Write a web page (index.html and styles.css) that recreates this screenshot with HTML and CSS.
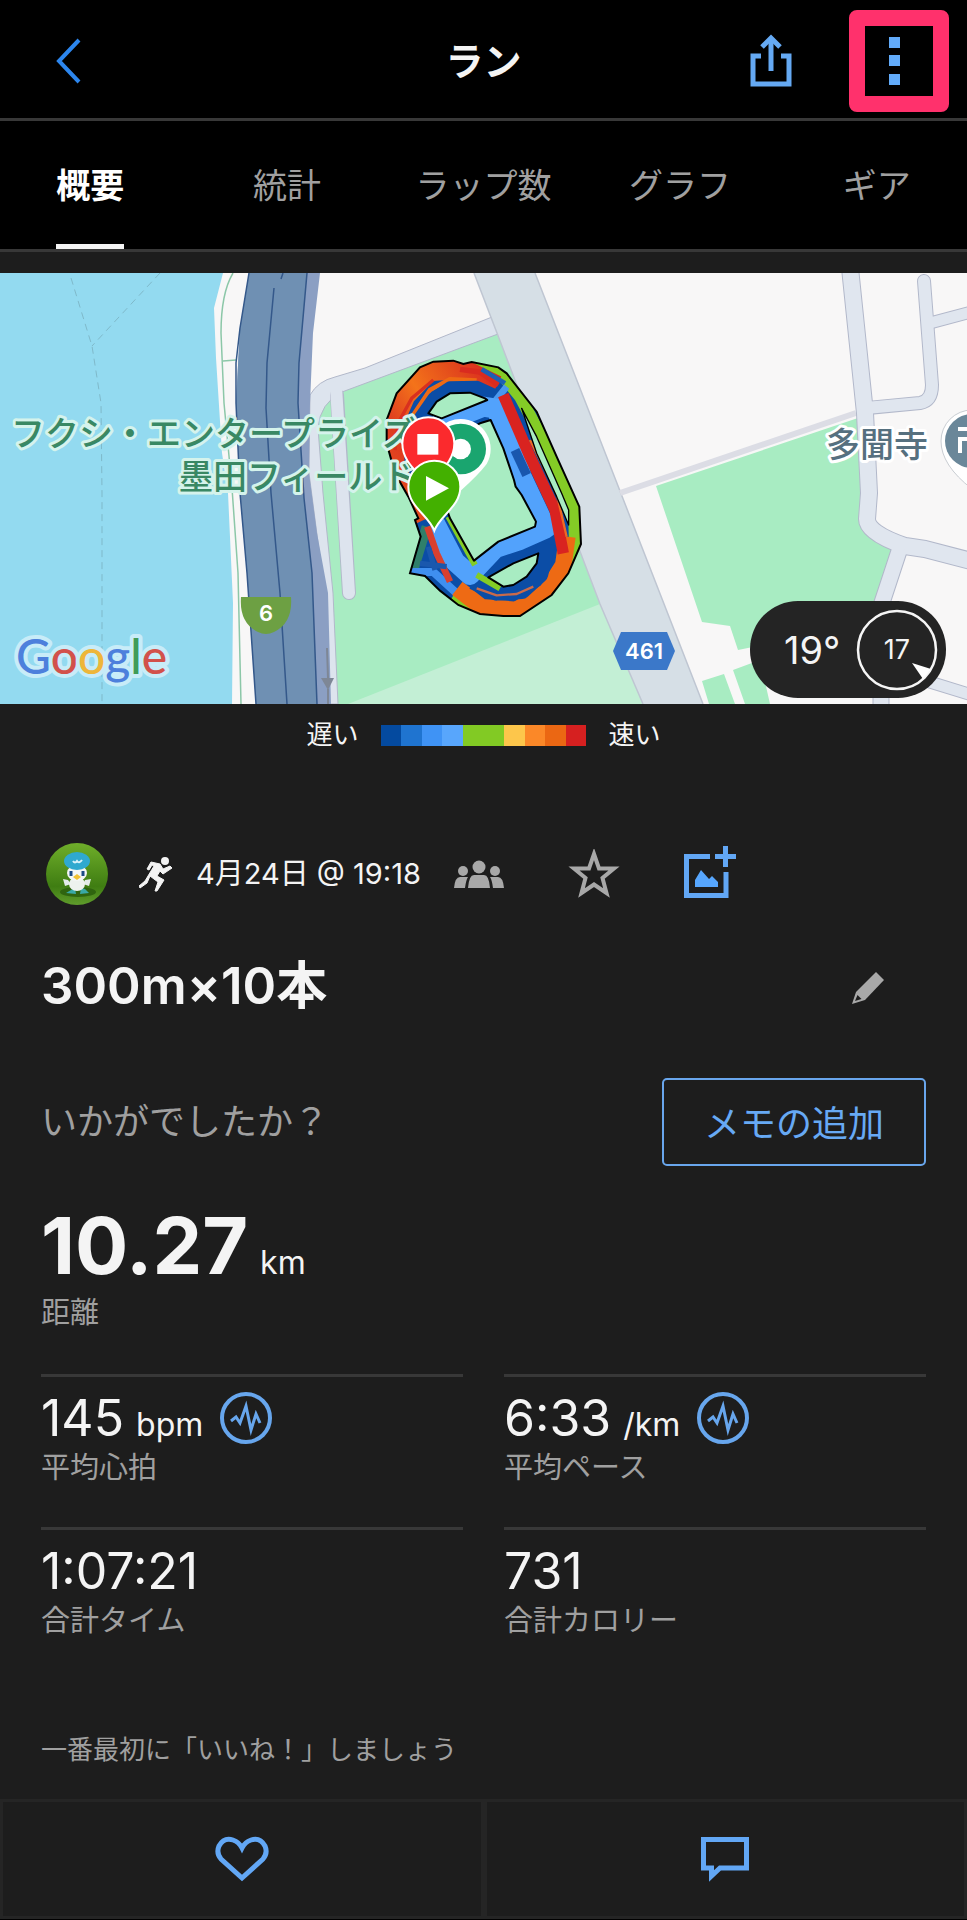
FILE: index.html
```html
<!DOCTYPE html>
<html lang="ja">
<head>
    <meta charset="UTF-8">
    <meta name="viewport" content="width=device-width, initial-scale=1.0">
    <title>ラン</title>
    <link rel="stylesheet" href="styles.css">
</head>
<body>
    <header class="header">
        <button class="icon-button back-button" aria-label="戻る">
            <svg width="28" height="48" viewBox="0 0 28 48"><path d="M24 3 L4 24 L24 45" fill="none" stroke="#2c86ee" stroke-width="4"/></svg>
        </button>
        <h1>ラン</h1>
        <div class="header-actions">
            <button class="icon-button" aria-label="共有">
                <svg width="44" height="54" viewBox="0 0 44 54" fill="none" stroke="#65a9f3" stroke-width="5"><path d="M12 22 H4 V50 H40 V22 H32"/><path d="M22 37 V5"/><path d="M13 13 L22 4 L31 13"/></svg>
            </button>
            <button class="icon-button menu-button" aria-label="メニュー">
                <svg width="11" height="48" viewBox="0 0 11 48" fill="#62abfa"><path d="M0 0h11v11H0zM0 18h11v11H0zM0 37h11v11H0z"/></svg>
            </button>
        </div>
    </header>

    <nav class="tabs">
        <a href="#" class="tab active"><span>概要</span></a>
        <a href="#" class="tab"><span>統計</span></a>
        <a href="#" class="tab"><span>ラップ数</span></a>
        <a href="#" class="tab"><span>グラフ</span></a>
        <a href="#" class="tab"><span>ギア</span></a>
    </nav>

    <main>
        <svg class="map" viewBox="0 0 967 431" role="img" aria-label="コースマップ">
            <defs>
                <clipPath id="track-clip">
                    <path d="M190 65 250 62 280 72 305 66 385 82 410 100 500 215 560 350 628 500 633 612 595 700 545 765 450 828 400 828 330 822 265 795 210 752 165 708 120 700 152 590 135 540 145 535 115 470 75 400 50 310 50 240 80 160 150 82Z"/>
                </clipPath>
                <linearGradient id="heat" x1="0" y1="1" x2="1" y2="0">
                    <stop offset="0" stop-color="#ee5a1c"/>
                    <stop offset=".3" stop-color="#dd3a20"/>
                    <stop offset=".55" stop-color="#f4731a"/>
                    <stop offset=".8" stop-color="#e2481c"/>
                    <stop offset="1" stop-color="#d92320"/>
                </linearGradient>
            </defs>

            <rect width="967" height="431" fill="#f8f7f7"/>
            <path d="M0 0H223L214 35 216 85 222 180 228 220 233 330 232 431H0Z" fill="#93daf0"/>
            <g fill="none" stroke="#7fb9ca" stroke-width="1" stroke-dasharray="7 5">
                <path d="M71 5 92 73 101 130 102 220V431"/>
                <path d="M160 0 92 73"/>
            </g>
            <path d="M233 0Q221 20 221 60L224 130 232 215 238 300 241 431M223 88 236 87" fill="none" stroke="#8cc7a8" stroke-width="1.5"/>

            <!-- park and the lane around it -->
            <path d="M316 150 330 120 497 60 600 331 643 431H336L330 330Z" fill="#a8ecc2"/>
            <path d="M348 431 600 331 643 431Z" fill="#c3efd5"/>
            <path d="M310 122Q318 108 335 104L365 95 492 44 498 61 342 119Q320 130 318 155L323 220 333 320 338 431H327L322 300 309 200Z" fill="#dde4ee" stroke="#b2b8ca" stroke-width="1"/>
            <path d="M337 122 349 320" stroke="#b2b8ca" stroke-width="14" stroke-linecap="round"/>
            <path d="M336 114 349 320" stroke="#dde4ee" stroke-width="12" stroke-linecap="round"/>

            <!-- expressway -->
            <path d="M249 0H320L313 60 310 130 309 200 317 260 328 320 331 431H256L247 300 240 220 236 130 240 55Z" fill="#8b9fc3"/>
            <path d="M249 0H307L299 90 298 130 304 225 312 300 317 431H256L247 300 240 220 236 130 240 55Z" fill="#6f90b3"/>
            <g fill="none" stroke="#34588a" stroke-width="1.5">
                <path d="M249 0 240 55 236 90V130L240 220 247 300 256 431"/>
                <path d="M274 15 267 90 266 135 271 220 280 320 287 431M283 0 281 6"/>
                <path d="M307 0 299 90 298 130 304 225 312 300 317 431"/>
            </g>
            <path d="M327 375 328 405M328 416V431" stroke="#7e8796" stroke-width="2"/>
            <path d="M321 405H334L328 417Z" fill="#7e8796"/>

            <!-- avenue -->
            <path d="M474 0H535L620 218 703 431H643L600 331 497 60Z" fill="#d6dfe6"/>
            <path d="M474 0 497 60 600 331 643 431M535 0 620 218 703 431" fill="none" stroke="#bfc6d2" stroke-width="1.5"/>

            <!-- east side -->
            <path d="M620 220 856 140" stroke="#dcdde5" stroke-width="6"/>
            <path d="M656 213 858 145 865 250 895 270 872 350 738 377 730 353 702 349Z" fill="#a8ecc2"/>
            <path d="M702 408 724 401 735 431H709ZM733 397 760 387 770 431H745Z" fill="#a8ecc2"/>
            <g fill="none" stroke="#b2b8ca" stroke-linejoin="round">
                <path d="M850-5 865 140 869 220 867 246Q867 260 905 273L925 276 975 289" stroke-width="18"/>
                <path d="M900 275 872 360M881 400V440" stroke-width="17"/>
                <path d="M924 8 932 112Q932 128 920 130L868 135" stroke-width="14" stroke-linecap="round"/>
                <path d="M930 50 975 38M920 406 975 423" stroke-width="13"/>
            </g>
            <g fill="none" stroke="#e0e6ef" stroke-linejoin="round">
                <path d="M850-5 865 140 869 220 867 246Q867 260 905 273L925 276 975 289" stroke-width="16"/>
                <path d="M900 275 872 360M881 400V440" stroke-width="15"/>
                <path d="M924 8 932 112Q932 128 920 130L866 135" stroke-width="12" stroke-linecap="round"/>
                <path d="M930 50 975 38M920 406 975 423" stroke-width="11"/>
            </g>

            <!-- GPS track, drawn at three times the map scale -->
            <g transform="translate(370 67) scale(.3333)">
                <g clip-path="url(#track-clip)" fill="none" stroke-linejoin="round">
                    <rect width="700" height="850" fill="#0b4da6"/>
                    <path d="M170 560 130 690" stroke="#2f7f6a" stroke-width="30"/>
                    <path d="M120 696 190 696 260 760 300 785" stroke="#3f8ff0" stroke-width="24"/>
                    <path d="M290 68 385 90 450 170 530 320 612 510 615 610 590 700" stroke="#84cc26" stroke-width="36"/>
                    <path d="M245 775 330 825" stroke="#84cc26" stroke-width="40"/>
                    <path d="M262 745 335 802 440 810 530 755 580 675 592 590" stroke="#ee6a14" stroke-width="50"/>
                    <path d="M310 722 380 755 455 750 508 702 530 610" stroke="#0b4da6" stroke-width="54"/>
                    <path d="M320 745 380 766 440 762 490 740" stroke="#c96a4a" stroke-width="7"/>
                    <path d="M150 545 115 470 72 380 68 250 105 165 175 92 270 85 380 138" stroke="url(#heat)" stroke-width="64"/>
                    <path d="M75 330 84 250 125 175 190 120" stroke="#d9301f" stroke-width="10"/>
                    <path d="M270 88 330 96 385 135" stroke="#d92b1f" stroke-width="16"/>
                    <path d="M130 225 180 150 240 118 320 122" stroke="#ee6a14" stroke-width="14"/>
                    <path d="M145 240 190 175 240 142 320 140 380 168" stroke="#0b4da6" stroke-width="36"/>
                    <path d="M335 88 405 130" stroke="#1d60b4" stroke-width="14"/>
                    <path d="M370 190 410 140" stroke="#4b98ef" stroke-width="20"/>
                    <path d="M200 256 340 200 378 206 425 320 455 410 528 565 450 600 375 625 300 705 255 665 195 550" stroke="#52a2fc" stroke-width="60"/>
                    <path d="M435 330 470 405" stroke="#1957ae" stroke-width="28"/>
                    <path d="M400 165 480 350 555 510 580 640" stroke="#d92320" stroke-width="34"/>
                    <path d="M480 300 560 460 590 590" stroke="#ef6a22" stroke-width="7"/>
                    <path d="M172 560 200 640 240 725" stroke="#d9402f" stroke-width="20"/>
                    <path d="M175 620 195 690M150 670 230 680" stroke="#1a58ad" stroke-width="16"/>
                    <path d="M235 530 315 675M320 705 390 745" stroke="#84cc26" stroke-width="18"/>
                </g>
                <g fill="#a8ecc2" stroke="#000" stroke-width="6" stroke-linejoin="round">
                    <path d="M175 220 200 185 240 160 300 158 345 175 352 180 215 235Z"/>
                    <path d="M250 290 330 250 362 240 400 325 432 420 437 440 455 465 498 545 495 560 385 605 312 662 240 535 210 450Z"/>
                    <path d="M355 712 430 670 505 640 500 670 470 710 430 735 400 740Z"/>
                    <path d="M455 205 500 290 575 460 596 510V555L560 470 500 340Z" stroke-width="4"/>
                </g>
                <path d="M190 65 250 62 280 72 305 66 385 82 410 100 500 215 560 350 628 500 633 612 595 700 545 765 450 828 400 828 330 822 265 795 210 752 165 708 120 700 152 590 135 540 145 535 115 470 75 400 50 310 50 240 80 160 150 82Z" fill="none" stroke="#000" stroke-width="6"/>
            </g>

            <text x="11" y="173" class="map-label park">フクシ・エンタープライズ</text>
            <text x="179" y="216" class="map-label park">墨田フィールド</text>
            <text x="826" y="184" class="map-label temple">多聞寺</text>

            <g transform="translate(370 67) scale(.3333)">
                <path d="M272 237A90 90 0 0 1 350 372Q325 405 272 452Q182 400 182 327A90 90 0 0 1 272 237Z" fill="#fff"/>
                <circle cx="272" cy="327" r="76" fill="#1aa56f"/>
                <circle cx="272" cy="327" r="31" fill="#fff"/>
                <path d="M175 438C150 400 97 370 97 310A78 78 0 0 1 253 310C253 370 200 400 175 438Z" fill="#fb2a2d" stroke="#fff" stroke-width="6"/>
                <rect x="142" y="282" width="63" height="62" fill="#fff"/>
                <path d="M193 572C175 525 115 500 115 440A78 78 0 0 1 271 440C271 500 211 525 193 572Z" fill="#43b000" stroke="#fff" stroke-width="6"/>
                <path d="M168 408 237 445 168 482Z" fill="#fff"/>
            </g>

            <path d="M941 168A31 31 0 0 1 1003 168Q1003 190 972 216 941 192 941 168Z" fill="#fff" stroke="#c9cdd2" stroke-width="1"/>
            <circle cx="972" cy="168" r="27" fill="#6a8799"/>
            <path d="M958 156H972M960 180V166H972" fill="none" stroke="#fff" stroke-width="4"/>

            <path d="M241 324H291Q293 350 274 359 266 363 258 359 239 350 241 324Z" fill="#6da043"/>
            <text x="266" y="348" class="road-number">6</text>
            <path d="M621 359H667L675 378 667 397H621L613 378Z" fill="#3b78c9"/>
            <text x="644" y="386" class="road-number">461</text>

            <text x="16" y="401" class="map-logo"><tspan fill="#4d80dc">G</tspan><tspan fill="#d2514b">o</tspan><tspan fill="#eeb63a">o</tspan><tspan fill="#4d80dc">g</tspan><tspan fill="#3f9b58">l</tspan><tspan fill="#d2514b">e</tspan></text>

            <rect x="750" y="328" width="196" height="97" rx="48" fill="#242424"/>
            <text x="784" y="391" class="temperature">19°</text>
            <circle cx="897" cy="377" r="39" fill="none" stroke="#f5f5f5" stroke-width="2.5"/>
            <text x="897" y="386" class="wind">17</text>
            <path d="M912 390 931 396 923 406Z" fill="#fff"/>
        </svg>

        <div class="legend">
            <span>遅い</span>
            <div class="legend-bar">
                <i class="c1"></i><i class="c2"></i><i class="c3"></i><i class="c4"></i><i class="c5"></i><i class="c5"></i><i class="c6"></i><i class="c7"></i><i class="c8"></i><i class="c9"></i>
            </div>
            <span>速い</span>
        </div>

        <div class="content">
            <div class="meta">
                <svg class="avatar" width="64" height="64" viewBox="0 0 64 64">
                    <defs>
                        <linearGradient id="grass" x1="0" y1="0" x2="0" y2="1">
                            <stop offset="0" stop-color="#6fae2a"/>
                            <stop offset=".7" stop-color="#3f7d12"/>
                            <stop offset="1" stop-color="#5f9c2c"/>
                        </linearGradient>
                    </defs>
                    <circle cx="32" cy="32" r="31" fill="url(#grass)"/>
                    <ellipse cx="33" cy="50" rx="18" ry="5" fill="#2f640f"/>
                    <path d="M26 48 21 51 31 52 30 46ZM36 46 35 52 44 51 40 47Z" fill="#3aa9a6"/>
                    <path d="M23 38 18 37 20 44 26 42ZM40 38 46 37 44 44 38 42Z" fill="#e3ebe8"/>
                    <ellipse cx="32" cy="42" rx="8" ry="7" fill="#edf2ee"/>
                    <ellipse cx="32" cy="31" rx="10" ry="8" fill="#f4f6f5"/>
                    <ellipse cx="32" cy="19" rx="13" ry="9" fill="#2fa9cf"/>
                    <path d="M28 19Q30 22 32 19 34 22 37 18" fill="none" stroke="#d7f2fa" stroke-width="2"/>
                    <path d="M26 29V34M38 29V34" stroke="#1d4b85" stroke-width="3"/>
                    <path d="M28 35 32 32 36 35 32 38Z" fill="#f2c233"/>
                </svg>
                <svg class="sport" width="34" height="36" viewBox="0 0 34 36" fill="#f4f4f4">
                    <circle cx="26" cy="5" r="4"/>
                    <path d="M12 6 21 8 24 13 31 10 33 12 24 18 21 15 18 20 25 24 18 35 16 35 19 26 11 20 8 27 1 32 0 30 6 25 15 10 13 9 10 14 8 13Z" stroke="#f4f4f4" stroke-width="1" stroke-linejoin="round"/>
                </svg>
                <time class="date">4月24日 @ 19:18</time>
                <svg class="people" width="50" height="28" viewBox="0 0 50 28" fill="#a8a8a8">
                    <circle cx="25" cy="7" r="6.5"/><circle cx="9" cy="11" r="5"/><circle cx="41" cy="11" r="5"/>
                    <path d="M14 28Q15 15 20 15H30Q35 15 36 28ZM0 28Q1 17 6 17H14Q12 20 11 28ZM50 28Q49 17 44 17H36Q38 20 39 28Z"/>
                </svg>
                <button class="icon-button star-button" aria-label="お気に入り">
                    <svg width="52" height="50" viewBox="0 0 52 50"><path d="M26 5 31 19.500 46 19.500 34.500 29 38.500 44 26 35.500 13.500 44 17.500 29 6 19.500 21 19.500Z" fill="none" stroke="#a8a8a8" stroke-width="4"/></svg>
                </button>
                <button class="icon-button" aria-label="写真を追加">
                    <svg width="52" height="56" viewBox="0 0 52 56" fill="none" stroke="#62a7f5" stroke-width="5"><path d="M26 10.500H2.500V49.500H42V26"/><path d="M31 10.500H52M41.500 0V21"/><path d="M11 41V34L17 24 25 33 28 30 34 36V41Z" fill="#57a6fd" stroke="none"/></svg>
                </button>
            </div>

            <div class="title-row">
                <h2>300m×10本</h2>
                <button class="icon-button" aria-label="編集">
                    <svg width="32" height="36" viewBox="0 -4 32 36"><path d="M24 0 32 8 13 28 0 32 4 20Z" fill="#a8a8a8"/><path d="M5.500 23 9.500 27 3 29Z" fill="#1d1d1d"/></svg>
                </button>
            </div>

            <div class="note-row">
                <span>いかがでしたか？</span>
                <button class="note-button">メモの追加</button>
            </div>

            <div class="distance">
                <div class="distance-value"><strong>10.27</strong><span class="unit">km</span></div>
                <div class="label">距離</div>
            </div>

            <div class="stats">
                <div class="stat">
                    <div class="value">145<span class="unit">bpm</span>
                        <button class="icon-button pulse" aria-label="心拍グラフ"><svg width="54" height="54" viewBox="0 0 54 54" fill="none" stroke="#67a6ed"><circle cx="27" cy="27" r="24" stroke-width="4"/><path d="M12 30 17 26 21 32 27 15 32 39 37 23 41 32" stroke-width="3"/></svg></button>
                    </div>
                    <div class="label">平均心拍</div>
                </div>
                <div class="stat">
                    <div class="value">6:33<span class="unit">/km</span>
                        <button class="icon-button pulse" aria-label="ペースグラフ"><svg width="54" height="54" viewBox="0 0 54 54" fill="none" stroke="#67a6ed"><circle cx="27" cy="27" r="24" stroke-width="4"/><path d="M12 30 17 26 21 32 27 15 32 39 37 23 41 32" stroke-width="3"/></svg></button>
                    </div>
                    <div class="label">平均ペース</div>
                </div>
                <div class="stat">
                    <div class="value">1:07:21</div>
                    <div class="label">合計タイム</div>
                </div>
                <div class="stat">
                    <div class="value">731</div>
                    <div class="label">合計カロリー</div>
                </div>
            </div>

            <p class="like-hint">一番最初に「いいね！」しましょう</p>
        </div>
    </main>

    <footer class="actions">
        <button class="action" aria-label="いいね！">
            <svg width="54" height="46" viewBox="0 0 54 46"><path d="M27 42 6 23Q1 17 4 10 9 1 18 4 24 6 27 12 30 6 36 4 45 1 50 10 53 17 48 23Z" fill="none" stroke="#62a7f5" stroke-width="5"/></svg>
        </button>
        <button class="action" aria-label="コメント">
            <svg width="48" height="46" viewBox="0 0 48 46"><path d="M2.500 3.500H45.500V32H19L10.500 40V32H2.500Z" fill="none" stroke="#62a7f5" stroke-width="5"/></svg>
        </button>
    </footer>
</body>
</html>
```
FILE: styles.css
```css
* {
    box-sizing: border-box;
}

body {
    margin: 0;
    overflow-x: hidden;
    background-color: #000;
    color: #f4f4f4;
    font-family: Inter, "Noto Sans CJK JP", sans-serif;
}

button {
    font-family: inherit;
    cursor: pointer;
}

.icon-button {
    display: flex;
    align-items: center;
    padding: 0;
    border: none;
    background: none;
}

svg {
    display: block;
    flex-shrink: 0;
}

/* header */
.header {
    display: grid;
    grid-template-columns: 1fr auto 1fr;
    align-items: center;
    height: 121px;
    padding: 4px 18px 0;
    border-bottom: 3px solid #383838;
}

.header h1 {
    margin: 0;
    font-size: 38px;
    line-height: 56px;
    font-weight: 700;
}

.back-button {
    padding-left: 37px;
}

.header-actions {
    display: flex;
    justify-content: flex-end;
    align-items: center;
    gap: 56px;
}

.menu-button {
    width: 100px;
    height: 102px;
    padding-left: 24px;
    border: 16px solid #ff316c;
    border-radius: 8px;
}

/* tabs */
.tabs {
    display: grid;
    grid-template-columns: repeat(5, 1fr);
    height: 131px;
    margin: 0 -8px;
    border-bottom: 3px solid #383838;
}

.tab {
    display: flex;
    justify-content: center;
    color: #a0a0a0;
    font-size: 34px;
    line-height: 117px;
    text-decoration: none;
}

.tab span {
    padding-top: 6px;
    border-bottom: 5px solid transparent;
}

.tab.active {
    color: #fff;
    font-weight: 700;
}

.tab.active span {
    border-color: #f4f4f4;
}

/* map */
main {
    padding-top: 21px;
    background-color: #1d1d1d;
}

.map {
    width: 100%;
    height: auto;
}

.map-label {
    font-size: 34px;
    font-weight: 500;
    paint-order: stroke;
    stroke-width: 6px;
    stroke-linejoin: round;
}

.park {
    fill: #398864;
    stroke: #d5f3ec;
}

.temple {
    fill: #56707f;
    stroke: #fff;
}

.road-number {
    fill: #fff;
    font-size: 22px;
    font-weight: 600;
    text-anchor: middle;
}

.map-logo {
    font-family: Lato, sans-serif;
    font-size: 48px;
    font-weight: 500;
    paint-order: stroke;
    stroke: #c8ecf8;
    stroke-width: 8px;
    stroke-linejoin: round;
}

.temperature {
    fill: #f4f4f4;
    font-size: 38px;
}

.wind {
    fill: #f4f4f4;
    font-size: 27px;
    text-anchor: middle;
}

.legend {
    display: flex;
    justify-content: center;
    align-items: center;
    gap: 22px;
    padding: 12px 0;
    font-size: 26px;
    line-height: 38px;
}

.legend-bar {
    display: flex;
    width: 206px;
    height: 21px;
}

.legend-bar i {
    flex: 1;
}

.c1 { background-color: #044a9f; }
.c2 { background-color: #1f74d0; }
.c3 { background-color: #3f93f5; }
.c4 { background-color: #58a6fc; }
.c5 { background-color: #82ca24; }
.c6 { background-color: #fdc64b; }
.c7 { background-color: #fb8828; }
.c8 { background-color: #eb6713; }
.c9 { background-color: #d62020; }

/* activity */
.content {
    padding: 76px 41px 29px;
}

.meta {
    display: flex;
    align-items: center;
    height: 64px;
    padding-left: 4px;
}

.sport {
    margin-left: 30px;
}

.date {
    margin-left: 23px;
    font-size: 29px;
    line-height: 40px;
}

.people {
    margin-left: 33px;
}

.star-button {
    margin: 0 64px;
}

.title-row {
    display: flex;
    justify-content: space-between;
    align-items: center;
    margin-top: 48px;
    padding-right: 42px;
}

.title-row h2 {
    margin: 0;
    font-size: 51px;
    line-height: 64px;
    font-weight: 600;
}

.note-row {
    display: flex;
    justify-content: space-between;
    align-items: center;
    margin-top: 60px;
    color: #a0a0a0;
    font-size: 36px;
    line-height: 52px;
}

.note-button {
    width: 264px;
    height: 88px;
    padding-bottom: 4px;
    border: 2px solid #69a6ec;
    border-radius: 5px;
    background: none;
    color: #67a9f4;
    font-size: 36px;
}

.distance {
    margin-top: 31px;
}

.distance-value {
    display: flex;
    align-items: baseline;
    gap: 12px;
}

.distance-value strong {
    font-size: 79px;
    line-height: 96px;
    font-weight: 700;
}

.unit {
    font-size: 32px;
    line-height: 32px;
}

.label {
    color: #a0a0a0;
    font-size: 29px;
    line-height: 40px;
}

.stats {
    display: grid;
    grid-template-columns: 1fr 1fr;
    gap: 39px 41px;
    margin-top: 41px;
}

.stat {
    padding-top: 11px;
    border-top: 3px solid #383838;
}

.value {
    display: flex;
    align-items: baseline;
    gap: 12px;
    height: 60px;
    font-size: 50px;
    line-height: 60px;
}

.pulse {
    align-self: center;
    margin-left: 4px;
}

.like-hint {
    margin: 89px 0 0;
    color: #a0a0a0;
    font-size: 26px;
    line-height: 40px;
}

/* bottom actions */
.actions {
    display: grid;
    grid-template-columns: 1fr 1fr;
    background-color: #1d1d1d;
}

.action {
    display: flex;
    justify-content: center;
    align-items: center;
    height: 120px;
    padding: 0;
    border: 3px solid #252525;
    background: none;
}
```
